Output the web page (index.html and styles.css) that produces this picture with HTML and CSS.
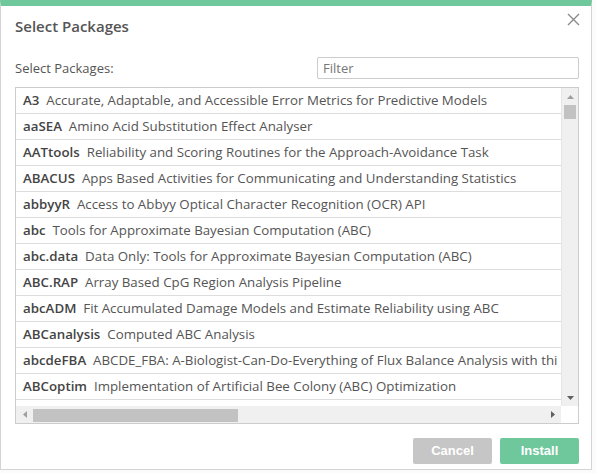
FILE: index.html
```html
<!DOCTYPE html>
<html>
<head>
<meta charset="utf-8">
<link rel="stylesheet" href="styles.css">
</head>
<body>
<div class="dialog">
  <div class="header">
    <div class="title">Select Packages</div>
    <svg class="close" width="13" height="13" viewBox="0 0 13 13"><path d="M1 1 L12 12 M12 1 L1 12" stroke="#8a8a8a" stroke-width="1.4" fill="none"/></svg>
  </div>
  <div class="toprow">
    <div class="label">Select Packages:</div>
    <div class="filter">Filter</div>
  </div>
  <div class="listbox">
    <div class="rows">
      <div class="row"><b>A3</b>&nbsp; Accurate, Adaptable, and Accessible Error Metrics for Predictive Models</div>
      <div class="row"><b>aaSEA</b>&nbsp; Amino Acid Substitution Effect Analyser</div>
      <div class="row"><b>AATtools</b>&nbsp; Reliability and Scoring Routines for the Approach-Avoidance Task</div>
      <div class="row"><b>ABACUS</b>&nbsp; Apps Based Activities for Communicating and Understanding Statistics</div>
      <div class="row"><b>abbyyR</b>&nbsp; Access to Abbyy Optical Character Recognition (OCR) API</div>
      <div class="row"><b>abc</b>&nbsp; Tools for Approximate Bayesian Computation (ABC)</div>
      <div class="row"><b>abc.data</b>&nbsp; Data Only: Tools for Approximate Bayesian Computation (ABC)</div>
      <div class="row"><b>ABC.RAP</b>&nbsp; Array Based CpG Region Analysis Pipeline</div>
      <div class="row"><b>abcADM</b>&nbsp; Fit Accumulated Damage Models and Estimate Reliability using ABC</div>
      <div class="row"><b>ABCanalysis</b>&nbsp; Computed ABC Analysis</div>
      <div class="row"><b>abcdeFBA</b>&nbsp; ABCDE_FBA: A-Biologist-Can-Do-Everything of Flux Balance Analysis with thi</div>
      <div class="row"><b>ABCoptim</b>&nbsp; Implementation of Artificial Bee Colony (ABC) Optimization</div>
    </div>
    <div class="vscroll">
      <div class="arrow"><svg width="7" height="4" viewBox="0 0 7 4"><path d="M0 4 L3.5 0 L7 4Z" fill="#a0a0a0"/></svg></div>
      <div class="vthumb"></div>
      <div class="vtrack"></div>
      <div class="arrow"><svg width="7" height="4" viewBox="0 0 7 4"><path d="M0 0 L3.5 4 L7 0Z" fill="#606060"/></svg></div>
    </div>
    <div class="hscroll">
      <div class="harrow"><svg width="4" height="7" viewBox="0 0 4 7"><path d="M4 0 L0 3.5 L4 7Z" fill="#a0a0a0"/></svg></div>
      <div class="hthumb"></div>
      <div class="htrack"></div>
      <div class="harrow"><svg width="4" height="7" viewBox="0 0 4 7"><path d="M0 0 L4 3.5 L0 7Z" fill="#606060"/></svg></div>
    </div>
    <div class="corner"></div>
  </div>
  <div class="footer">
    <div class="btn cancel">Cancel</div>
    <div class="btn install">Install</div>
  </div>
</div>
</body>
</html>
```
FILE: styles.css
```css
html, body { margin: 0; padding: 0; }
body {
  width: 596px; height: 473px; overflow: hidden;
  background: #fbfbfb;
  font-family: "Open Sans", "Noto Sans", sans-serif;
}
.dialog {
  width: 592px; height: 470px; box-sizing: border-box;
  background: #fff;
  border-top: 6px solid #6fc79c;
  border-left: 1px solid #d4d4d4;
  border-right: 1px solid #d4d4d4;
  border-bottom: 1px solid #d4d4d4;
  padding: 0 12px 0 14px;
  display: flex; flex-direction: column;
}
.header {
  height: 40px; display: flex; justify-content: space-between; align-items: center;
}
.title { font-size: 15px; font-weight: 600; color: #555; }
.close { align-self: flex-start; margin-top: 7px; margin-right: -1px; }
.toprow {
  margin-top: 11px; height: 22px; display: flex; justify-content: space-between; align-items: center;
}
.label { font-size: 13px; color: #555; }
.filter {
  width: 262px; height: 22px; box-sizing: border-box;
  border: 1px solid #ccc; border-radius: 2px;
  font-size: 13px; color: #777; padding-left: 5px; line-height: 20px;
}
.listbox {
  margin-top: 8px; height: 337px; box-sizing: border-box;
  border: 1px solid #ccc;
  display: grid; grid-template-columns: 1fr 17px; grid-template-rows: 1fr 17px;
  overflow: hidden;
}
.rows { overflow: hidden; min-width: 0; }
.row {
  height: 25px; border-bottom: 1px solid #ddd;
  padding-left: 7px; line-height: 25px;
  font-size: 13.3px; color: #555; white-space: nowrap; overflow: hidden;
}
.row b { color: #444; font-weight: 600; }
.vscroll {
  display: flex; flex-direction: column; background: #f0f0f0;
  border-left: 1px solid #e6e6e6;
}
.arrow { height: 17px; display: flex; align-items: center; justify-content: center; flex: none; }
.vthumb { height: 14px; margin: 0 2px; background: #c2c2c2; flex: none; }
.vtrack { flex: 1; }
.hscroll { display: flex; background: #f0f0f0; }
.harrow { width: 17px; display: flex; align-items: center; justify-content: center; flex: none; }
.hthumb { width: 205px; margin: 3px 0 1px 0; background: #c2c2c2; flex: none; }
.htrack { flex: 1; }
.corner { background: #fff; }
.footer {
  margin-top: 14px; display: flex; justify-content: flex-end; gap: 8px;
}
.btn {
  width: 79px; height: 26px; border-radius: 2px;
  font-family: "Liberation Sans", Arial, sans-serif; font-weight: 700; font-size: 13px;
  color: #fff; text-align: center; line-height: 26px;
}
.cancel { background: #c6c6c6; }
.install { background: #6fc79c; }
```
